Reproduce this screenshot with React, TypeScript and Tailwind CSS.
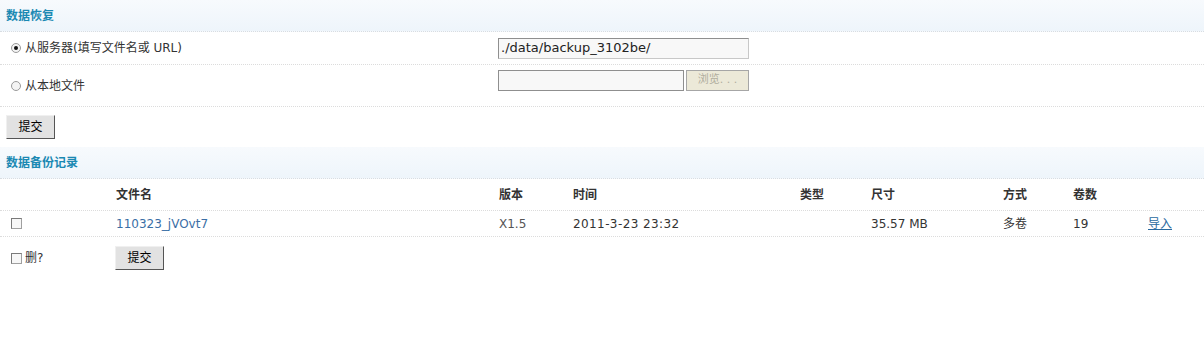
import React from 'react';

const font = "font-['DejaVu_Sans','Noto_Sans_CJK_SC',sans-serif]";

const Radio: React.FC<{ checked?: boolean }> = ({ checked }) => (
  <span className="inline-flex h-[10px] w-[10px] items-center justify-center rounded-full border border-[#9a9a9a] bg-[#f4f4f4]">
    {checked && <span className="h-[4px] w-[4px] rounded-full bg-[#111]" />}
  </span>
);

const Check: React.FC = () => (
  <span className="inline-block h-[11px] w-[11px] border border-[#a0a0a0] border-t-[#7a7a7a] border-l-[#7a7a7a] bg-[#f7f7f7]" />
);

const SubmitButton: React.FC = () => (
  <button className="h-[24px] w-[49px] border border-[#f0f0f0] border-b-[#555] border-r-[#555] bg-[#e2e2e2] text-[12px] text-black">
    提交
  </button>
);

const SectionHeader: React.FC<{ title: string }> = ({ title }) => (
  <div className="flex h-[32px] items-center border-b border-dotted border-[#d8dde2] bg-gradient-to-b from-[#f7fafd] to-[#eef5fb] pl-[6px]">
    <span className="text-[12px] font-bold text-[#1b89b3]">{title}</span>
  </div>
);

const cols = 'grid grid-cols-[116px_383px_74px_227px_71px_132px_70px_75px_1fr]';

export default function App() {
  return (
    <div className={`w-[1204px] h-[346px] bg-white text-[12px] text-[#333] ${font}`}>
      <SectionHeader title="数据恢复" />

      <div className="flex h-[33px] items-center border-b border-dotted border-[#dcdcdc]">
        <div className="flex w-[498px] items-center gap-[4px] pl-[11px]">
          <Radio checked />
          <span>从服务器(填写文件名或 URL)</span>
        </div>
        <div className="flex h-[21px] w-[251px] items-center border border-[#8f8f8f] border-b-[#c8c8c8] border-r-[#c8c8c8] bg-[#f8f8f8] pl-[2px] text-[13px] text-[#222]">
          ./data/backup_3102be/
        </div>
      </div>

      <div className="flex h-[42px] items-start border-b border-dotted border-[#dcdcdc]">
        <div className="mt-[12px] flex w-[498px] items-center gap-[4px] pl-[11px]">
          <Radio />
          <span>从本地文件</span>
        </div>
        <div className="mt-[5px] h-[21px] w-[186px] border border-[#8f8f8f] bg-[#f8f8f8]" />
        <div className="ml-[2px] mt-[5px] flex h-[21px] w-[63px] items-center justify-center border border-[#a6a6a6] bg-[#ece9d8] text-[11px] text-[#b0ad9e]">
          浏览. . .
        </div>
      </div>

      <div className="flex h-[40px] items-center pl-[6px]">
        <SubmitButton />
      </div>

      <SectionHeader title="数据备份记录" />

      <div className={`${cols} h-[32px] items-center border-b border-dotted border-[#dcdcdc] font-bold text-[#333]`}>
        <span />
        <span>文件名</span>
        <span>版本</span>
        <span>时间</span>
        <span>类型</span>
        <span>尺寸</span>
        <span>方式</span>
        <span>卷数</span>
        <span />
      </div>

      <div className={`${cols} h-[26px] items-center border-b border-dotted border-[#dcdcdc]`}>
        <span className="flex pl-[11px]"><Check /></span>
        <span className="text-[#3a6ea5]">110323_jVOvt7</span>
        <span className="text-[#555]">X1.5</span>
        <span className="tracking-[0.4px]">2011-3-23 23:32</span>
        <span />
        <span>35.57 MB</span>
        <span>多卷</span>
        <span>19</span>
        <span className="text-[#2a6aa0] underline">导入</span>
      </div>

      <div className="flex h-[42px] items-center">
        <div className="flex w-[115px] items-center gap-[3px] pl-[11px] text-[#333]">
          <Check />
          <span className="text-[#333]">删?</span>
        </div>
        <SubmitButton />
      </div>
    </div>
  );
}
